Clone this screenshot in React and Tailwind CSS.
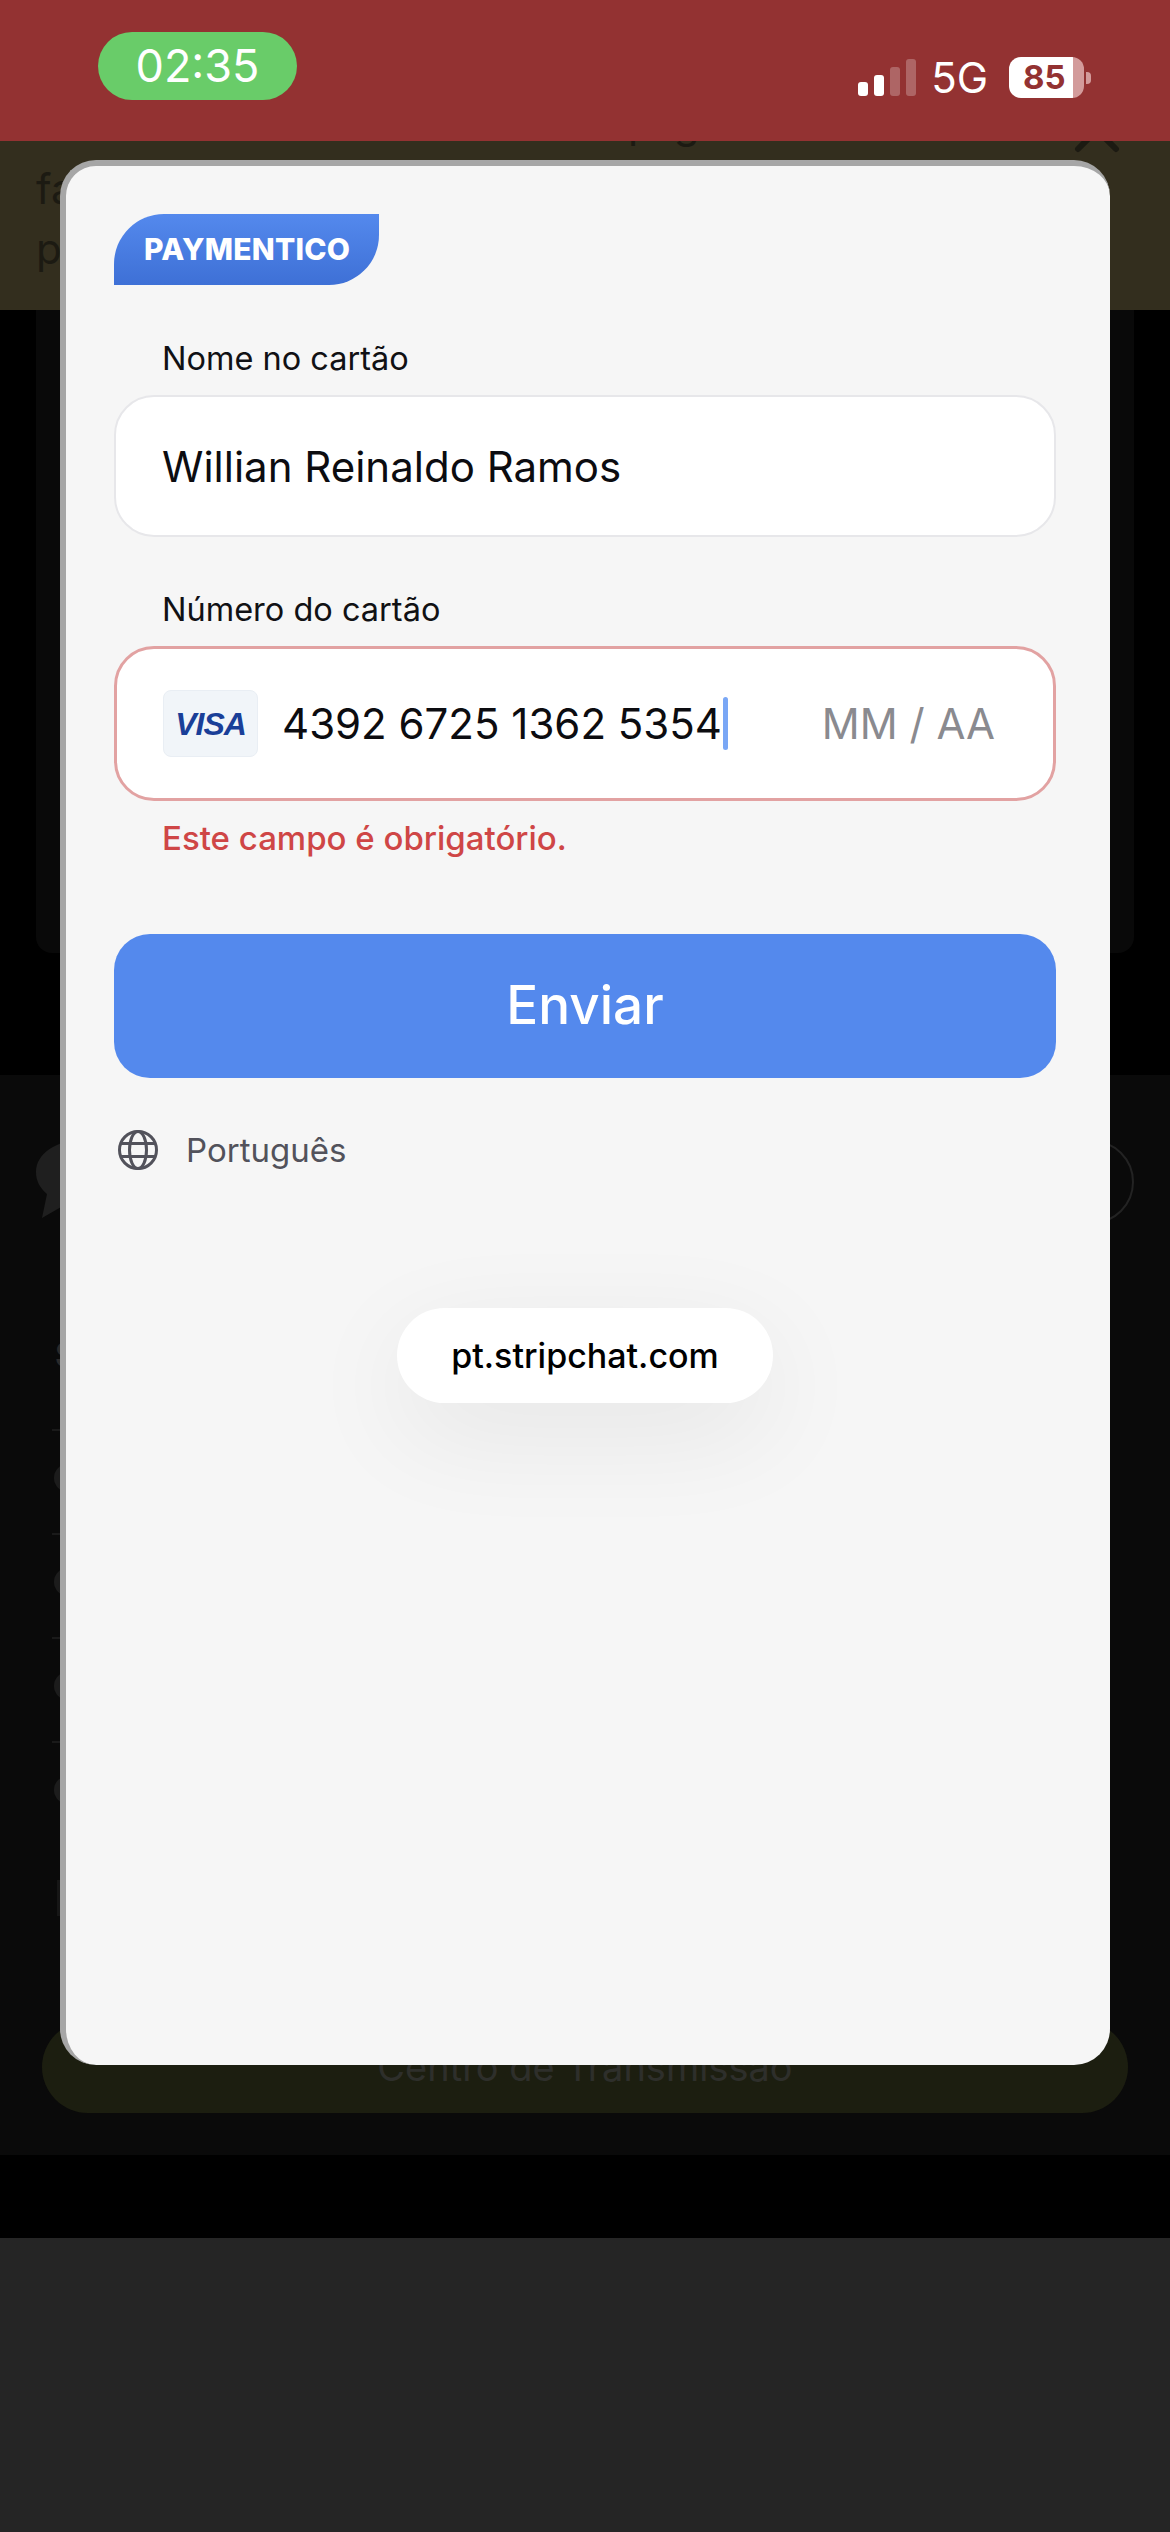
import React from "react";

const listRows = [0, 1, 2, 3];

function GlobeIcon() {
  return (
    <svg width="40" height="40" viewBox="0 0 40 40" fill="none" stroke="#52525b" strokeWidth="3">
      <circle cx="20" cy="20" r="18.5" />
      <ellipse cx="20" cy="20" rx="8.5" ry="18.5" />
      <path d="M3 13.5h34M3 26.5h34" />
    </svg>
  );
}

function StatusBar() {
  return (
    <header className="h-[141px] shrink-0 bg-[#933232] relative z-10 flex justify-between pl-[98px] pr-[79px]">
      <div className="mt-[32px] h-[68px] w-[199px] rounded-[34px] bg-[#69cc69] flex items-center justify-center text-white text-[45px]">
        02:35
      </div>
      <div className="mt-[57px] h-[41px] flex items-center">
        <div className="flex items-end gap-[6px] h-[37px] self-end mb-[2px]">
          <span className="w-[10px] h-[14px] rounded-[3px] bg-white" />
          <span className="w-[10px] h-[21px] rounded-[3px] bg-white" />
          <span className="w-[10px] h-[29px] rounded-[3px] bg-white/25" />
          <span className="w-[10px] h-[37px] rounded-[3px] bg-white/25" />
        </div>
        <span className="ml-[15px] text-white text-[42px] leading-none">5G</span>
        <div className="ml-[21px] w-[75px] h-[41px] rounded-[12px] bg-[linear-gradient(90deg,#fff_85%,#d39b9b_85%)] flex items-center pl-[14px] text-[33px] font-bold text-[#933232] leading-none">
          85
        </div>
        <span className="ml-[2px] w-[5px] h-[12px] rounded-r-[4px] bg-[#d39b9b]" />
      </div>
    </header>
  );
}

function Backdrop() {
  return (
    <>
      <section className="h-[169px] shrink-0 bg-[#332e1e] relative overflow-hidden pl-[36px] text-[42px] leading-[60px] text-[#1c1a12]">
        <p className="mt-[-48px] pl-[592px] tracking-[20px]">pg</p>
        <p className="mt-[6px]">fa</p>
        <p>p</p>
        <svg className="absolute left-[1073px] top-[-35px]" width="48" height="48" viewBox="0 0 48 48" stroke="#1c1a12" strokeWidth="6" strokeLinecap="round">
          <path d="M5 5l38 38M43 5L5 43" />
        </svg>
      </section>
      <main className="h-[765px] shrink-0 bg-black px-[36px]">
        <div className="h-[643px] bg-[#090909] rounded-b-[16px]" />
      </main>
      <section className="h-[1080px] shrink-0 bg-[#0a0a0a] flex flex-col px-[36px] pt-[65px] pb-[42px]">
        <div className="flex justify-between h-[85px]">
          <svg width="90" height="80" viewBox="0 0 90 80" fill="#1f1f1f">
            <path d="M46 0C20 0 0 14 0 32c0 9 4 16 11 22L6 78l26-15c4 1 9 1 14 1 25 0 44-14 44-32S71 0 46 0z" />
          </svg>
          <div className="w-[84px] h-[84px] rounded-full border-2 border-[#232323]" />
        </div>
        <h2 className="mt-[115px] ml-[19px] text-[34px] leading-[30px] font-bold text-[#2a2a2a]">Sobre</h2>
        <ul className="mt-[59px] ml-[16px]">
          {listRows.map((row) => (
            <li key={row} className="h-[104px]">
              <div className="w-[40px] h-[2px] bg-[#1a1a1a]" />
              <div className="mt-[33px] ml-[2px] w-[28px] h-[28px] rounded-full bg-[#1c1c1c]" />
            </li>
          ))}
        </ul>
        <div className="mt-[35px] ml-[21px] w-[40px] h-[36px] bg-[#161616]" />
        <button className="mt-auto mx-[6px] h-[92px] rounded-[46px] bg-[#1c1e10] text-[38px] text-[#2e2f2b]">
          Centro de Transmissão
        </button>
      </section>
      <div className="h-[83px] shrink-0 bg-black" />
      <footer className="flex-1 bg-[#252525]" />
    </>
  );
}

function PaymentModal() {
  return (
    <div className="absolute left-[60px] top-[160px] w-[1050px] h-[1905px] rounded-[36px] bg-[#f6f6f6] border-t-[6px] border-l-[6px] border-[#a6a6a6] z-20 flex flex-col pt-[48px] pl-[48px] pr-[54px]">
      <div className="w-[265px] h-[71px] rounded-tl-[50px] rounded-br-[50px] bg-[linear-gradient(180deg,#5489ed,#3e70d6)] flex items-center pl-[30px] text-white text-[30px] font-extrabold tracking-[0.2px]">
        PAYMENTICO
      </div>

      <label className="mt-[55px] pl-[48px] text-[32.5px] leading-[38px] text-[#111114]">Nome no cartão</label>
      <div className="mt-[17px] h-[142px] rounded-[40px] bg-white border-2 border-[#e7e7ea] flex items-center pl-[46px] text-[42px] text-[#0c0c10]">
        Willian Reinaldo Ramos
      </div>

      <label className="mt-[54px] pl-[48px] text-[32.5px] leading-[38px] text-[#111114]">Número do cartão</label>
      <div className="mt-[17px] h-[155px] rounded-[40px] bg-white border-[3px] border-[#e2a2a2] flex items-center pl-[46px] pr-[58px] text-[42px]">
        <div className="w-[95px] h-[67px] rounded-[8px] bg-[#f1f5f9] border border-[#e9eef4] flex items-center justify-center font-['Liberation_Sans',sans-serif] italic font-bold text-[32px] tracking-[-1px] text-[#1a3f98]">
          VISA
        </div>
        <span className="ml-[24px] text-[#0c0c10]">4392 6725 1362 5354</span>
        <span className="ml-[1px] w-[5px] h-[53px] rounded-full bg-[#7aa7f5]" />
        <span className="ml-auto text-[#8a8a8f]">MM / AA</span>
      </div>
      <p className="mt-[17px] pl-[48px] text-[33px] leading-[40px] font-medium text-[#cf4646]">Este campo é obrigatório.</p>

      <button className="mt-[76px] h-[144px] rounded-[36px] bg-[#5489ed] text-white text-[53px] font-medium">Enviar</button>

      <div className="mt-[52px] flex items-center pl-[4px] gap-[28px] text-[33px] leading-[40px] text-[#52525b]">
        <GlobeIcon />
        <span>Português</span>
      </div>

      <div className="mt-[138px] self-center w-[376px] h-[95px] rounded-full bg-white shadow-[0_30px_110px_rgba(0,0,0,0.07)] flex items-center justify-center text-[34px] font-medium text-black">
        pt.stripchat.com
      </div>
    </div>
  );
}

export default function App() {
  return (
    <div className="relative w-[1170px] h-[2532px] overflow-hidden flex flex-col font-['Inter',sans-serif]">
      <StatusBar />
      <Backdrop />
      <PaymentModal />
    </div>
  );
}
